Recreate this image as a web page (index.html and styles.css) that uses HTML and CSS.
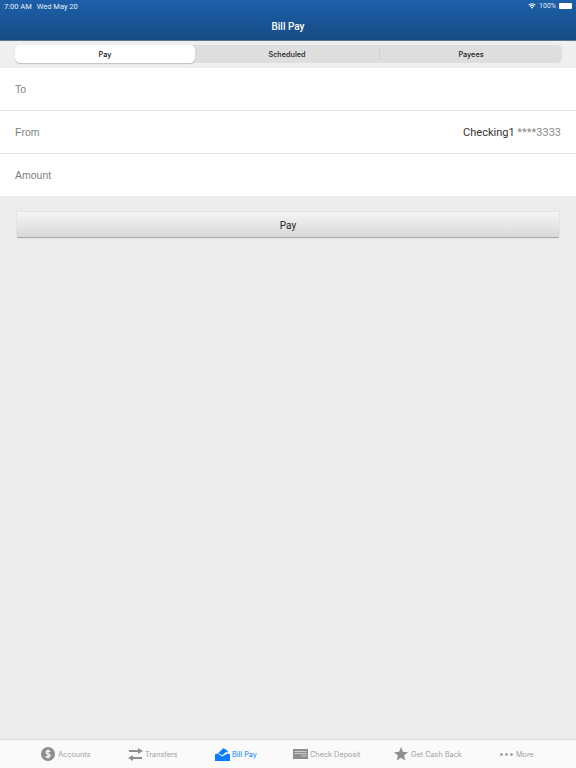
FILE: index.html
```html
<!DOCTYPE html>
<html lang="en">
<head>
    <meta charset="UTF-8">
    <meta name="viewport" content="width=device-width, initial-scale=1.0">
    <title>Bill Pay</title>
    <link rel="stylesheet" href="styles.css">
</head>
<body>
    <header class="header">
        <div class="status">
            <span class="status-time">7:00 AM</span>
            <span class="status-date">Wed May 20</span>
            <svg class="wifi" width="8" height="6" viewBox="0 0 10 8">
                <path d="M5 7.600 3.400 5.900a2.300 2.300 0 0 1 3.200 0z" fill="#fff"/>
                <path d="M2.600 5.100 1.700 4.100a4.700 4.700 0 0 1 6.600 0l-.9 1a3.400 3.400 0 0 0-4.800 0z" fill="#fff"/>
                <path d="M.9 3.300 0 2.300a7.100 7.100 0 0 1 10 0l-.9 1a5.800 5.800 0 0 0-8.200 0z" fill="#fff"/>
            </svg>
            <span class="status-battery">100%</span>
            <span class="battery"></span>
        </div>
        <h1 class="title">Bill Pay</h1>
    </header>

    <div class="segment-bar">
        <div class="segments">
            <div class="segment active">Pay</div>
            <div class="segment">Scheduled</div>
            <div class="segment divided">Payees</div>
        </div>
    </div>

    <main class="main">
        <div class="rows">
            <div class="row"><span class="label">To</span></div>
            <div class="row">
                <span class="label">From</span>
                <span class="account">Checking1 <span class="account-num">****3333</span></span>
            </div>
            <div class="row"><span class="label">Amount</span></div>
        </div>
        <button type="button" class="pay-button">Pay</button>
    </main>

    <nav class="tabs">
        <div class="tab">
            <svg width="14" height="14" viewBox="0 0 14 14">
                <circle cx="7" cy="7" r="7" fill="#8e8e8e"/>
                <path d="M9.200 4.900C8.800 4.200 8 3.900 7 3.900c-1.200 0-2.100.6-2.100 1.600 0 2.200 4.300 1 4.300 3 0 1-.9 1.600-2.200 1.600-1 0-1.900-.4-2.300-1.200M7 2.600v8.800" fill="none" stroke="#fff" stroke-width="1.100"/>
            </svg>
            <span>Accounts</span>
        </div>
        <div class="tab tight">
            <svg width="15" height="13" viewBox="0 0 15 13">
                <path d="M10 0l5 3-5 3V4H1V2h9zM5 7v2h9v2H5v2L0 10z" fill="#8e8e8e"/>
            </svg>
            <span>Transfers</span>
        </div>
        <div class="tab tight current">
            <svg width="15" height="13" viewBox="0 0 15 13">
                <path d="M3 5.200 8.600 0l3.200 3.200-4.400 4.100z" fill="#0a7cff"/>
                <path d="M10.200 1l2.900 2.600-1.100 1-2.800-2.600z" fill="#0a7cff"/>
                <path d="M0 6.300l2.400-.9 5 3.200 5-3.200 2.600.9V13H0z" fill="#0a7cff"/>
            </svg>
            <span>Bill Pay</span>
        </div>
        <div class="tab tight">
            <svg width="15" height="10" viewBox="0 0 15 10">
                <path d="M0 0h15v10H0z" fill="#8e8e8e"/>
                <path d="M1.500 2.500h12M1.500 4.600h12M8 6.800h5.500" stroke="#ddd" stroke-width=".8"/>
            </svg>
            <span>Check Deposit</span>
        </div>
        <div class="tab">
            <svg width="14" height="14" viewBox="0 0 14 14">
                <path d="M7 0l1.900 4.800 5.100.4-3.900 3.300 1.200 5L7 10.800l-4.300 2.700 1.200-5L0 5.200l5.100-.4z" fill="#8e8e8e"/>
            </svg>
            <span>Get Cash Back</span>
        </div>
        <div class="tab">
            <svg width="13" height="3" viewBox="0 0 13 3">
                <circle cx="1.500" cy="1.500" r="1.300" fill="#8e8e8e"/>
                <circle cx="6.500" cy="1.500" r="1.300" fill="#8e8e8e"/>
                <circle cx="11.500" cy="1.500" r="1.300" fill="#8e8e8e"/>
            </svg>
            <span>More</span>
        </div>
    </nav>
</body>
</html>
```

FILE: styles.css
```css
* {
    box-sizing: border-box;
}
body {
    font-family: Roboto, "Liberation Sans", sans-serif;
    background-color: #ececec;
    margin: 0;
    padding: 0;
    display: flex;
    flex-direction: column;
    height: 768px;
    overflow: hidden;
}
.header {
    height: 41px;
    color: white;
    background: linear-gradient(#1c60aa, #174a84);
    border-bottom: 1px solid #5d7690;
    flex-shrink: 0;
}
.status {
    height: 12px;
    padding: 0 4px;
    display: flex;
    align-items: center;
    font-size: 7.500px;
    color: #e6edf5;
}
.status-time {
    margin-right: 5px;
}
.wifi {
    margin-left: auto;
    margin-right: 3px;
}
.status-battery {
    margin-right: 3px;
    font-size: 7px;
}
.battery {
    width: 13px;
    height: 6px;
    background-color: white;
    border-radius: 1px;
}
.title {
    margin: 8px 0 0;
    font-size: 10px;
    line-height: 14px;
    font-weight: 500;
    text-align: center;
}
.segment-bar {
    height: 27px;
    padding: 4px 14px 4px 15px;
    background-color: #efefef;
    flex-shrink: 0;
}
.segments {
    height: 18px;
    display: grid;
    grid-template-columns: 180px 184px 183px;
    background-color: #dedede;
    border-radius: 5px;
    font-family: Inter, sans-serif;
    font-size: 7.300px;
    font-weight: 500;
    color: #222;
}
.segment {
    display: flex;
    align-items: center;
    justify-content: center;
}
.segment.active {
    background-color: white;
    border-radius: 5px;
    box-shadow: 0 1px 1px rgba(0, 0, 0, 0.2);
    color: #111;
}
.segment.divided {
    border-left: 1px solid #d0d0d0;
    margin: 3px 0;
}
.main {
    flex: 1;
}
.rows {
    background-color: white;
}
.row {
    height: 43px;
    padding: 0 15px;
    display: flex;
    align-items: center;
    justify-content: space-between;
    font-size: 11px;
    border-bottom: 1px solid #e6e6e6;
}
.row:last-child {
    height: 42px;
    border-bottom: none;
}
.label {
    font-family: "Liberation Sans", sans-serif;
    font-size: 10.500px;
    color: #808080;
}
.account {
    color: #333;
}
.account-num {
    color: #8a8a8a;
}
.pay-button {
    display: block;
    width: 542px;
    height: 26px;
    margin: 16px 0 0 17px;
    padding: 1px 0 0;
    font-family: inherit;
    font-size: 10px;
    color: #222;
    background: linear-gradient(#f5f5f5, #d8d8d8);
    border: none;
    border-bottom: 1px solid #aaa;
    border-radius: 1px;
    box-shadow: 0 0 1px rgba(0, 0, 0, 0.35);
}
.tabs {
    height: 29px;
    padding-left: 41px;
    display: grid;
    grid-template-columns: 87px 87px 78px 101px 106px auto;
    align-items: center;
    background-color: #fafafa;
    border-top: 1px solid #dcdcdc;
    flex-shrink: 0;
    font-family: Inter, sans-serif;
    font-size: 7.300px;
    color: #a0a0a0;
}
.tab {
    display: flex;
    align-items: center;
    gap: 3px;
    white-space: nowrap;
}
.tab.tight {
    gap: 2px;
}
.tab.current {
    color: #0a7cff;
}
```
